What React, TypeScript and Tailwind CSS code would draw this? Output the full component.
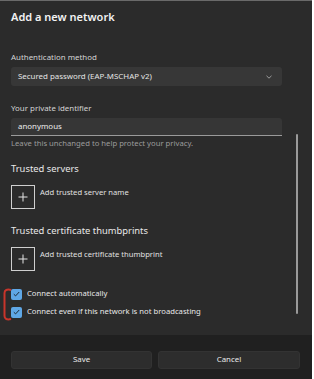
import React from 'react';

const font = { fontFamily: '"Noto Sans", "Open Sans", sans-serif' };

const PlusBox = () => (
  <div className="w-[24px] h-[24px] border border-[#cfcfcf] flex items-center justify-center shrink-0">
    <svg width="10" height="10" viewBox="0 0 10 10">
      <path d="M5 0.5v9M0.5 5h9" stroke="#e6e6e6" strokeWidth="1" fill="none" />
    </svg>
  </div>
);

const Check = () => (
  <div className="w-[11px] h-[11px] rounded-[2px] bg-[#5fa7e6] flex items-center justify-center shrink-0">
    <svg width="7" height="6" viewBox="0 0 7 6">
      <path d="M0.8 3.2l1.8 1.7L6.2 1" stroke="#1e2a36" strokeWidth="1" fill="none" />
    </svg>
  </div>
);

export default function App() {
  return (
    <div className="w-[312px] h-[379px] bg-[#2b2b2b] border-t border-[#6a6a6a] flex flex-col relative" style={font}>
      <div className="flex-1 px-[11px] pt-[6px]">
        <div className="h-[20px] leading-[20px] text-[11px] font-semibold text-[#f2f2f2]">Add a new network</div>

        <div className="mt-[23px] h-[14px] leading-[14px] text-[7.9px] text-[#d4d4d4]">Authentication method</div>
        <div className="mt-[3px] h-[19px] w-[271px] rounded-[3px] bg-[#373737] flex items-center justify-between px-[7px]">
          <span className="text-[7.9px] text-[#e4e4e4]">Secured password (EAP-MSCHAP v2)</span>
          <svg width="6" height="4" viewBox="0 0 6 4" className="mr-[3px]">
            <path d="M0.5 0.8L3 3.2L5.5 0.8" stroke="#a8a8a8" strokeWidth="0.9" fill="none" />
          </svg>
        </div>

        <div className="mt-[15px] h-[14px] leading-[14px] text-[7.9px] text-[#d4d4d4]">Your private identifier</div>
        <div className="mt-[3px] h-[18px] w-[271px] rounded-t-[3px] bg-[#363636] border-b border-[#9a9a9a] flex items-center px-[7px]">
          <span className="text-[7.9px] text-[#ececec]">anonymous</span>
        </div>
        <div className="mt-[1px] h-[12px] leading-[12px] text-[7.7px] text-[#9c9c9c]">Leave this unchanged to help protect your privacy.</div>

        <div className="mt-[12px] h-[16px] leading-[16px] text-[9.4px] text-[#e8e8e8]">Trusted servers</div>
        <div className="mt-[8px] flex items-start gap-[5px]">
          <PlusBox />
          <span className="text-[7.6px] leading-[12px] text-[#e0e0e0] mt-[1px]">Add trusted server name</span>
        </div>

        <div className="mt-[14px] h-[16px] leading-[16px] text-[9.4px] text-[#e8e8e8]">Trusted certificate thumbprints</div>
        <div className="mt-[8px] flex items-start gap-[5px]">
          <PlusBox />
          <span className="text-[7.6px] leading-[12px] text-[#e0e0e0] mt-[1px]">Add trusted certificate thumbprint</span>
        </div>

        <div className="mt-[16px] h-[14px] flex items-center gap-[5px]">
          <Check />
          <span className="text-[7.7px] text-[#e8e8e8]">Connect automatically</span>
        </div>
        <div className="mt-[4px] h-[14px] flex items-center gap-[5px]">
          <Check />
          <span className="text-[7.7px] text-[#e8e8e8]">Connect even if this network is not broadcasting</span>
        </div>
      </div>

      <div className="h-[44px] bg-[#202020] px-[11px] pt-[16px] flex gap-[6px]">
        <button className="w-[141px] h-[18px] rounded-[3px] bg-[#2d2d2d] border border-[#333333] text-[7.9px] text-[#e8e8e8]">Save</button>
        <button className="w-[142px] h-[18px] rounded-[3px] bg-[#2d2d2d] border border-[#333333] text-[7.9px] text-[#e8e8e8]">Cancel</button>
      </div>

      {/* scrollbar */}
      <div className="absolute left-[296px] top-[133px] w-[2px] h-[180px] rounded-full bg-[#9a9a9a]" />

      {/* red annotation bracket */}
      <svg className="absolute left-0 top-[286px]" width="14" height="36" viewBox="0 0 14 36">
        <path d="M11 3 C7 2 4.5 3 4.5 6 L4.5 29 C4.5 32 7 33 11 32" stroke="#c9352b" strokeWidth="2" fill="none" />
      </svg>
    </div>
  );
}
